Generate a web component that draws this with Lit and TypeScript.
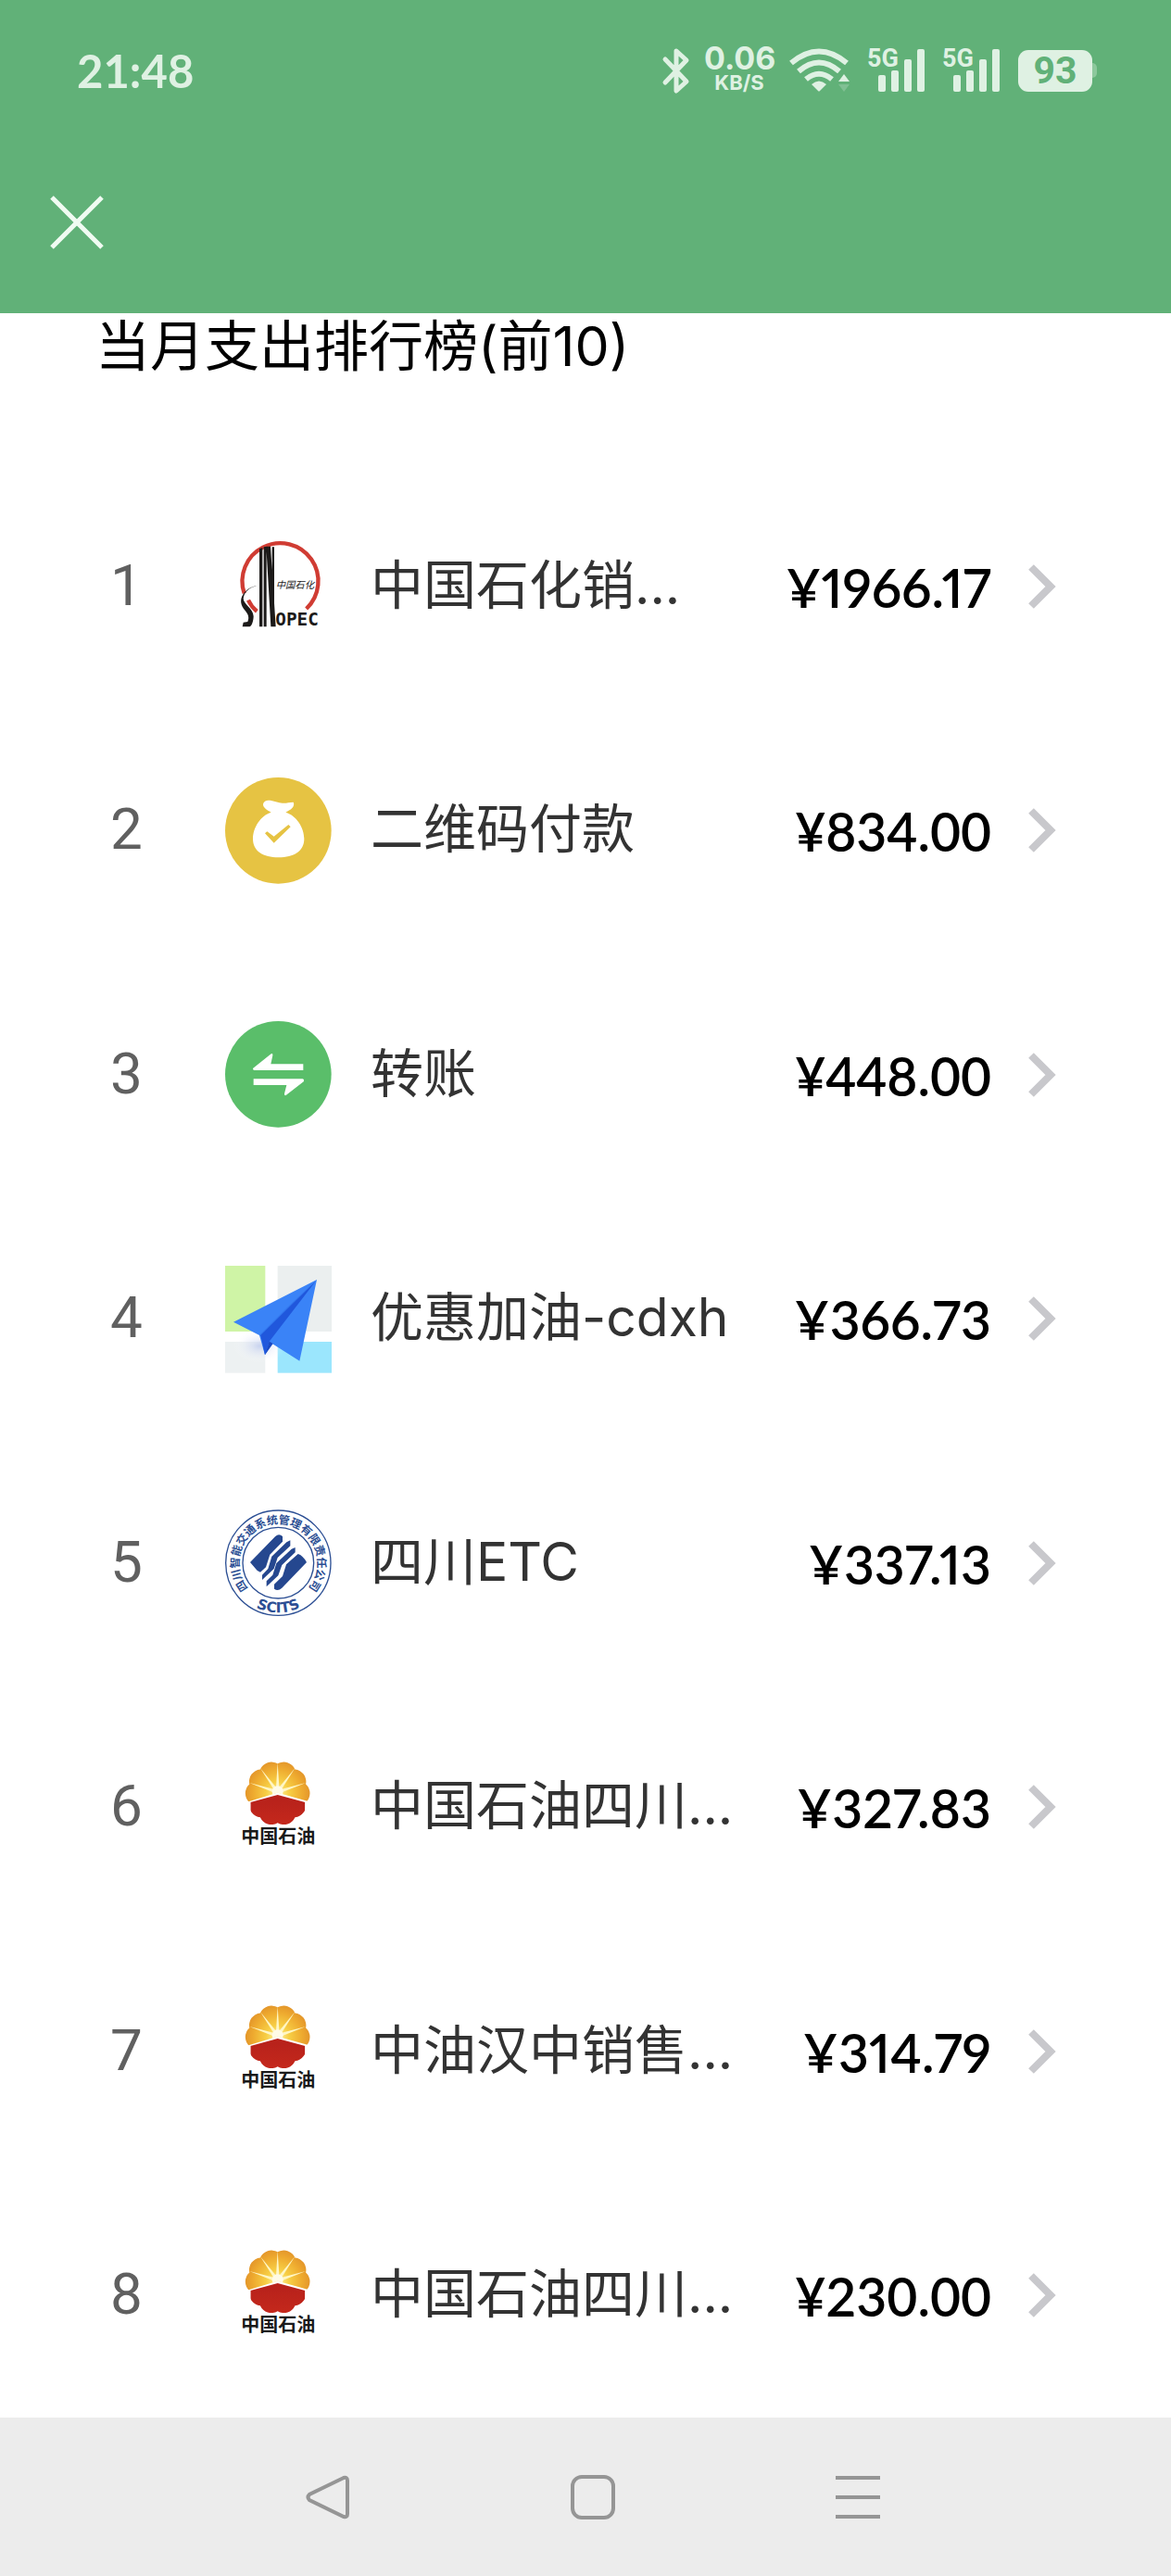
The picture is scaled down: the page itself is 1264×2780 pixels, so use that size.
import { LitElement, html, svg, css } from "lit";
import { customElement, property } from "lit/decorators.js";
import { classMap } from "lit/directives/class-map.js";

type LogoName = "sinopec" | "bag" | "transfer" | "map" | "scits" | "petro";

interface Payee {
  logo: LogoName;
  name: string;
  amount: string;
}

const PAYEES: Payee[] = [
  { logo: "sinopec", name: "中国石化销...", amount: "1966.17" },
  { logo: "bag", name: "二维码付款", amount: "834.00" },
  { logo: "transfer", name: "转账", amount: "448.00" },
  { logo: "map", name: "优惠加油-cdxh", amount: "366.73" },
  { logo: "scits", name: "四川ETC", amount: "337.13" },
  { logo: "petro", name: "中国石油四川...", amount: "327.83" },
  { logo: "petro", name: "中油汉中销售...", amount: "314.79" },
  { logo: "petro", name: "中国石油四川...", amount: "230.00" },
];

/** Closed outline of a ten-petal flower. */
function flower(cx: number, cy: number, r: number, petal: number): string {
  const points = Array.from({ length: 10 }, (_, i) => {
    const a = ((-90 + i * 36) * Math.PI) / 180;
    return `${(cx + r * Math.cos(a)).toFixed(1)} ${(cy + r * Math.sin(a)).toFixed(1)}`;
  });
  const arcs = points.map((_, i) => `A${petal} ${petal} 0 0 1 ${points[(i + 1) % 10]}`);
  return `M${points[0]}${arcs.join("")}Z`;
}

@customElement("payee-logo")
class PayeeLogo extends LitElement {
  @property() name: LogoName = "bag";

  static styles = css`
    :host {
      display: block;
    }
    .logo {
      display: block;
      width: 100%;
      height: 100%;
      overflow: visible;
    }
    .opec {
      font: bold 58px "DejaVu Sans Mono", monospace;
      fill: #1c1a19;
    }
    .script {
      font: italic 31px "Noto Sans CJK SC", sans-serif;
      fill: #222;
    }
    .ring {
      font: bold 36px "Noto Sans CJK SC", sans-serif;
      fill: #2c4f94;
    }
    .ring-latin {
      font: bold 46px "DejaVu Sans", sans-serif;
      fill: #2c4f94;
    }
    .petro-name {
      font: bold 60px "Noto Sans CJK SC", sans-serif;
      fill: #1a1a1a;
    }
  `;

  private sinopec() {
    return html`<svg class="logo" viewBox="39 16 345 345" aria-hidden="true">
      <path d="M101 212A123 123 0 1 1 302 262" fill="none" stroke="#d03c33" stroke-width="13" />
      <path d="M114 234Q124 256 142 270" fill="none" stroke="#d03c33" stroke-width="13" />
      <path d="M150 68L160 64V320H150ZM164 62L173 60V320H164ZM172 60H186L203 320H187ZM191 62H198V320H191Z" fill="#1c1a19" />
      <path d="M142 188C118 192 101 208 98 228C97 246 130 260 131 286C131 302 124 320 118 320H95L98 306L112 304C118 290 114 280 104 268C88 250 86 232 98 214C108 200 124 190 142 188Z" fill="#1c1a19" />
      <text class="script" x="203" y="197">中国石化</text>
      <text class="opec" x="202" y="316">OPEC</text>
    </svg>`;
  }

  private bag() {
    return html`<svg class="logo" viewBox="39 57 345 345" aria-hidden="true">
      <circle cx="211" cy="229" r="172" fill="#e6c343" />
      <path d="M188 170C176 164 162 155 162 145C163 133 176 130 188 132C201 134 211 139 224 140C237 141 247 137 260 137C265 146 257 157 250 161L235 170C270 180 295 220 295 256C295 296 262 316 212 316C162 316 129 296 129 256C129 220 154 180 188 170Z" fill="#fff" />
      <path d="M168 238L175 232L197 248L244 210L251 217L197 269Z" fill="#e6c343" />
    </svg>`;
  }

  private transfer() {
    return html`<svg class="logo" viewBox="39 845 345 345" aria-hidden="true">
      <circle cx="211" cy="1017" r="172" fill="#5abe6a" />
      <path d="M129 998L188 951Q194 948 193 956L187 984H292V1004H133Q128 1003 129 998Z" fill="#fff" />
      <path d="M131 1032H290Q296 1033 294 1040L236 1085Q230 1087 231 1080L238 1052H131Z" fill="#fff" />
    </svg>`;
  }

  private map() {
    return html`<svg class="logo" viewBox="39 45 345 345" aria-hidden="true">
      <defs>
        <radialGradient id="shade">
          <stop offset="0" stop-color="#b9c6ee" stop-opacity="0.7" />
          <stop offset="1" stop-color="#fff" stop-opacity="0" />
        </radialGradient>
      </defs>
      <rect x="39" y="45" width="130" height="213" fill="#cff4a6" />
      <rect x="209" y="45" width="175" height="213" fill="#ebefef" />
      <rect x="39" y="291" width="130" height="101" fill="#edf1f2" />
      <rect x="209" y="291" width="175" height="101" fill="#9be6fd" />
      <ellipse cx="150" cy="305" rx="85" ry="55" fill="url(#shade)" />
      <path d="M336 90L66 227L150 270L168 334L190 296L280 353Z" fill="#3a83f7" />
      <path d="M336 90L240 180L150 270L157 274L260 170Z" fill="#3176ee" />
      <path d="M332 95L240 185L154 270L168 334L182 290Z" fill="#2057dc" />
      <path d="M168 334L182 290L194 297Z" fill="#1a49c4" />
    </svg>`;
  }

  private scits() {
    return html`<svg class="logo" viewBox="39 42 345 345" aria-hidden="true">
      <defs>
        <path id="upper" d="M121 305A127 127 0 1 1 301 305" />
        <path id="lower" d="M50 215A161 161 0 0 0 372 215" />
      </defs>
      <circle cx="211" cy="215" r="170" fill="#fff" stroke="#2c4f94" stroke-width="4" />
      <circle cx="211" cy="215" r="115" fill="none" stroke="#2c4f94" stroke-width="4" />
      <g fill="#25478f">
        <path d="M120 213L201 130Q213 118 225 129V146L184 188L171 229L153 245Q142 242 136 232Z" />
        <path d="M250 142V160L209 198L197 234L159 270V254L178 234L190 194L238 148Z" />
        <path d="M266 165V181L223 222L211 256L173 292V274L193 254L205 216L254 170Z" />
        <path d="M303 213L223 296Q210 308 198 299V284L225 258L237 220L275 186Q290 190 303 213Z" />
      </g>
      <text class="ring" text-anchor="middle">
        <textPath href="#upper" startOffset="50%">四川智能交通系统管理有限责任公司</textPath>
      </text>
      <text class="ring-latin" text-anchor="middle">
        <textPath href="#lower" startOffset="50%">SCITS</textPath>
      </text>
    </svg>`;
  }

  private petro() {
    const outline = flower(209, 164, 96, 40);
    const rays = [-162, -126, -90, -54, -18].map((deg) => {
      const at = (r: number, d: number) => {
        const a = ((deg + d) * Math.PI) / 180;
        return `${(209 + r * Math.cos(a)).toFixed(1)} ${(160 + r * Math.sin(a)).toFixed(1)}`;
      };
      return svg`<path d="M${at(96, 0)}L${at(14, 22)}L${at(14, -22)}Z" fill="#fff6c4" />`;
    });
    return html`<svg class="logo" viewBox="39 37 345 345" aria-hidden="true">
      <defs>
        <radialGradient id="gold" gradientUnits="userSpaceOnUse" cx="209" cy="164" r="106">
          <stop offset="0" stop-color="#fff3a0" />
          <stop offset="0.35" stop-color="#f7cf45" />
          <stop offset="0.75" stop-color="#eeaa2f" />
          <stop offset="1" stop-color="#e3952a" />
        </radialGradient>
        <linearGradient id="red" x1="0" y1="0" x2="0" y2="1">
          <stop offset="0" stop-color="#c4261b" />
          <stop offset="0.6" stop-color="#b8221b" />
          <stop offset="1" stop-color="#c4281c" />
        </linearGradient>
        <clipPath id="top"><path d="M90 40H330V196L209 162L90 198Z" /></clipPath>
        <clipPath id="bottom"><path d="M121 193L209 169L298 193V290H121Z" /></clipPath>
      </defs>
      <g clip-path="url(#top)">
        <path d="${outline}" fill="url(#gold)" />
        ${rays}
        <circle cx="209" cy="158" r="18" fill="#fffbe6" />
      </g>
      <path d="${outline}" fill="url(#red)" clip-path="url(#bottom)" />
      <text class="petro-name" x="91" y="326">中国石油</text>
    </svg>`;
  }

  render() {
    return this[this.name]();
  }
}

@customElement("status-bar")
class StatusBar extends LitElement {
  static styles = css`
    :host {
      display: flex;
      align-items: center;
      justify-content: space-between;
      padding: 0 80px 0 83px;
      color: #dff1e3;
      font-family: Lato, "Noto Sans CJK SC", sans-serif;
      font-weight: 700;
    }
    .time {
      font-size: 49px;
      line-height: 60px;
    }
    .tray {
      display: flex;
      align-items: center;
      gap: 16px;
    }
    .icon {
      display: block;
      overflow: visible;
      fill: currentColor;
    }
    .speed {
      width: 76px;
      font-family: Inter, sans-serif;
      text-align: center;
      white-space: nowrap;
    }
    .rate {
      font-size: 34px;
      line-height: 26px;
    }
    .unit {
      font-size: 22px;
      line-height: 26px;
    }
    .net {
      font: bold 27px Roboto, sans-serif;
    }
    .battery {
      display: flex;
      align-items: center;
    }
    .level {
      width: 80px;
      border-radius: 11px;
      background: #dff1e3;
      color: #61b178;
      font-family: Roboto, sans-serif;
      font-size: 41px;
      line-height: 45px;
      text-align: center;
    }
    .nub {
      width: 5px;
      height: 16px;
      border-radius: 0 5px 5px 0;
      background: #8cc89c;
    }
  `;

  private signal() {
    return html`<svg class="icon" width="65" height="60" viewBox="0 -6 65 60" role="img" aria-label="5G">
      <text class="net" x="-1" y="20">5G</text>
      <rect x="11" y="29" width="8" height="18" rx="2" />
      <rect x="25" y="24" width="8" height="23" rx="2" />
      <rect x="39" y="12" width="8" height="35" rx="2" />
      <rect x="53" y="1" width="8" height="46" rx="2" />
    </svg>`;
  }

  render() {
    return html`
      <div class="time">21:48</div>
      <div class="tray">
        <svg class="icon" width="29" height="49" viewBox="0 0 29 49" aria-hidden="true">
          <path d="M3 12L26 36L15 46V3L26 13L3 37" fill="none" stroke="currentColor" stroke-width="5" stroke-linecap="round" stroke-linejoin="round" />
        </svg>
        <div class="speed">
          <div class="rate">0.06</div>
          <div class="unit">KB/S</div>
        </div>
        <svg class="icon" width="69" height="48" viewBox="0 0 69 48" aria-hidden="true">
          <g fill="none" stroke="currentColor" stroke-width="6">
            <path d="M2 16Q32 -9 62 16" />
            <path d="M10 25Q32 6 54 25" />
            <path d="M18 33.500Q32 22 46 33.500" />
          </g>
          <path d="M24 39Q32 32 40 39L33 46Q32 47 31 46Z" />
          <path d="M53 36L59 28L65 36Z" />
          <path d="M53 39H65L59 47Z" opacity="0.25" />
        </svg>
        ${this.signal()} ${this.signal()}
        <div class="battery">
          <div class="level">93</div>
          <div class="nub"></div>
        </div>
      </div>
    `;
  }
}

@customElement("app-root")
class AppRoot extends LitElement {
  static styles = css`
    :host {
      display: flex;
      flex-direction: column;
      min-height: 100vh;
      background: #fff;
      font-family: Inter, "Noto Sans CJK SC", sans-serif;
    }
    button {
      display: flex;
      align-items: center;
      justify-content: center;
      margin: 0;
      padding: 0;
      border: 0;
      background: none;
      cursor: pointer;
    }
    .header {
      box-sizing: border-box;
      height: 338px;
      padding-top: 36px;
      background: #61b178;
    }
    .status {
      height: 80px;
    }
    .close {
      width: 97px;
      height: 97px;
      margin: 75px 0 0 34px;
    }
    .main {
      display: flex;
      flex: 1;
      flex-direction: column;
    }
    .title {
      box-sizing: border-box;
      height: 163px;
      margin: 0;
      padding-left: 103px;
      color: #000;
      font-size: 59px;
      font-weight: 400;
      line-height: 72px;
    }
    .list {
      display: flex;
      flex: 1;
      flex-direction: column;
      margin: 0;
      padding: 0;
      list-style: none;
    }
    .item {
      display: flex;
      flex: 1;
    }
    .row {
      display: flex;
      flex: 1;
      align-items: center;
      min-height: 160px;
      padding: 0 124px 0 119px;
      color: #333;
      text-decoration: none;
    }
    .rank {
      width: 124px;
      padding-bottom: 2px;
      color: #606060;
      font-family: Roboto, sans-serif;
      font-size: 62px;
      line-height: 80px;
    }
    .logo {
      width: 115px;
      height: 115px;
    }
    .name {
      flex: 1;
      min-width: 0;
      padding: 0 0 2px 42px;
      font-size: 57px;
      line-height: 80px;
      white-space: nowrap;
    }
    .amount {
      padding-top: 2px;
      color: #000;
      font-family: Lato, "Noto Sans CJK SC", sans-serif;
      font-size: 57px;
      font-weight: 600;
      font-variant-numeric: proportional-nums;
      line-height: 80px;
      white-space: nowrap;
    }
    .whole {
      font-variant-numeric: tabular-nums;
    }
    .chevron {
      width: 30px;
      height: 48px;
      margin-left: 40px;
    }
    .nav {
      display: flex;
      justify-content: center;
      height: 171px;
      padding-left: 16px;
      background: #ececec;
    }
    .key {
      width: 286px;
    }
    .glyph {
      width: 48px;
      height: 48px;
      fill: none;
      stroke: #959595;
      stroke-width: 4;
    }
  `;

  render() {
    return html`
      <header class="header">
        <status-bar class="status"></status-bar>
        <button class="close" aria-label="关闭">
          <svg width="58" height="58" viewBox="0 0 58 58" aria-hidden="true">
            <path d="M2 2L56 56M56 2L2 56" stroke="#f0fbf2" stroke-width="5" />
          </svg>
        </button>
      </header>
      <main class="main">
        <h1 class="title">当月支出排行榜(前10)</h1>
        <ol class="list">
          ${PAYEES.map(
            (payee, i) => html`<li class="item">
              <a class="row" href="#payee-${i + 1}">
                <span class="rank">${i + 1}</span>
                <payee-logo class="logo" name=${payee.logo}></payee-logo>
                <span class="name">${payee.name}</span>
                <span class=${classMap({ amount: true, whole: payee.amount.endsWith(".00") })}>¥${payee.amount}</span>
                <svg class="chevron" viewBox="0 0 30 48" aria-hidden="true">
                  <path d="M3 3L24 24L3 45" fill="none" stroke="#c8c8cc" stroke-width="8" />
                </svg>
              </a>
            </li>`
          )}
        </ol>
      </main>
      <nav class="nav">
        <button class="key" aria-label="返回">
          <svg class="glyph" viewBox="0 0 48 48" aria-hidden="true">
            <path d="M41 3L4 21Q1 24 4 27L41 45Q45 46 45 42V6Q45 2 41 3Z" />
          </svg>
        </button>
        <button class="key" aria-label="主页">
          <svg class="glyph" viewBox="0 0 48 48" aria-hidden="true">
            <rect x="2" y="2" width="44" height="44" rx="10" />
          </svg>
        </button>
        <button class="key" aria-label="最近任务">
          <svg class="glyph" viewBox="0 0 48 48" aria-hidden="true">
            <path d="M0 3H48M0 24H48M0 45H48" />
          </svg>
        </button>
      </nav>
    `;
  }
}
